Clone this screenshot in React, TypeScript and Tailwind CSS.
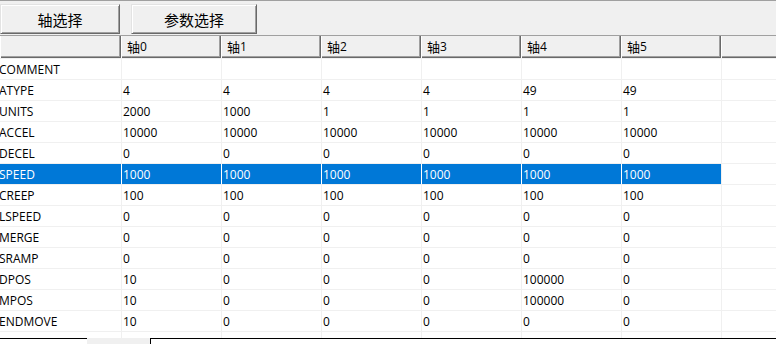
import React from 'react';

const cols = ['0', '1', '2', '3', '4', '5'];
const z6 = ['0', '0', '0', '0', '0', '0'];
const rows: [string, string[]][] = [
  ['COMMENT', ['', '', '', '', '', '']],
  ['ATYPE', ['4', '4', '4', '4', '49', '49']],
  ['UNITS', ['2000', '1000', '1', '1', '1', '1']],
  ['ACCEL', ['10000', '10000', '10000', '10000', '10000', '10000']],
  ['DECEL', z6],
  ['SPEED', ['1000', '1000', '1000', '1000', '1000', '1000']],
  ['CREEP', ['100', '100', '100', '100', '100', '100']],
  ['LSPEED', z6],
  ['MERGE', z6],
  ['SRAMP', z6],
  ['DPOS', ['10', '0', '0', '0', '100000', '0']],
  ['MPOS', ['10', '0', '0', '0', '100000', '0']],
  ['ENDMOVE', ['10', '0', '0', '0', '0', '0']],
];

function Btn({ w, children }: { w: string; children: React.ReactNode }) {
  return (
    <div
      className={`${w} h-[30px] flex items-center justify-center text-[15px] leading-none bg-[#f0f0f0] border border-t-[#e3e3e3] border-l-[#e3e3e3] border-r-[#696969] border-b-[#696969] shadow-[inset_1px_1px_0_#ffffff,inset_-1px_-1px_0_#a0a0a0]`}
    >
      <span className="font-['Noto_Sans_CJK_SC',sans-serif]">{children}</span>
    </div>
  );
}

export default function App() {
  return (
    <div className="w-[776px] h-[344px] overflow-hidden bg-[#f0f0f0] font-['Open_Sans','Noto_Sans_CJK_SC',sans-serif] text-[12px] text-black flex flex-col">
      <div className="h-[35px] shrink-0 border-t border-[#a0a0a0] flex items-start pt-[3px] gap-[11px]">
        <Btn w="w-[120px]">轴选择</Btn>
        <Btn w="w-[126px]">参数选择</Btn>
      </div>

      <div className="h-[23px] shrink-0 flex border-t border-[#a0a0a0] bg-[#f0f0f0]">
        <div className="w-[121px] h-full shadow-[inset_1px_0_0_#ffffff,inset_-1px_-1px_0_#696969,inset_-2px_-2px_0_#a0a0a0]" />
        {cols.map((c) => (
          <div
            key={c}
            className="w-[100px] h-full flex items-center pl-[6px] pb-[1px] shadow-[inset_1px_0_0_#ffffff,inset_-1px_-1px_0_#696969,inset_-2px_-2px_0_#a0a0a0]"
          >
            <span className="text-[13px] font-['Noto_Sans_CJK_SC',sans-serif] leading-none">轴</span>
            <span className="leading-none">{c}</span>
          </div>
        ))}
        <div className="flex-1 h-full shadow-[inset_1px_0_0_#ffffff,inset_0_-1px_0_#696969,inset_0_-2px_0_#a0a0a0]" />
      </div>

      <div className="flex-1 flex flex-col bg-white border-t border-[#f0f0f0] overflow-hidden">
        {rows.map(([label, vals]) => {
          const sel = label === 'SPEED';
          return (
            <div key={label} className="h-[21px] shrink-0 flex border-b border-[#f0f0f0] leading-[21px]">
              <div
                className={`w-[121px] h-full overflow-hidden whitespace-nowrap ${sel ? 'bg-[#0078d7] text-white' : ''}`}
              >
                <span className="ml-[-1px]">{label}</span>
              </div>
              {vals.map((v, i) => (
                <div
                  key={i}
                  className={`w-[100px] h-full pl-[1px] border-l whitespace-nowrap overflow-hidden ${
                    sel ? 'bg-[#0078d7] text-white border-white' : 'border-[#f0f0f0]'
                  }`}
                >
                  {v}
                </div>
              ))}
              <div className="flex-1 h-full border-l border-[#f0f0f0]" />
            </div>
          );
        })}
        <div className="h-[6px] shrink-0 flex">
          <div className="w-[121px]" />
          {cols.map((c) => (
            <div key={c} className="w-[100px] border-l border-[#f0f0f0]" />
          ))}
          <div className="flex-1 border-l border-[#f0f0f0]" />
        </div>
      </div>

      <div className="h-[6px] shrink-0 flex">
        <div className="w-[87px] bg-white border-t border-black" />
        <div className="w-[63px] bg-[#f0f0f0]" />
        <div className="flex-1 bg-white border-t border-l border-black" />
      </div>
    </div>
  );
}
